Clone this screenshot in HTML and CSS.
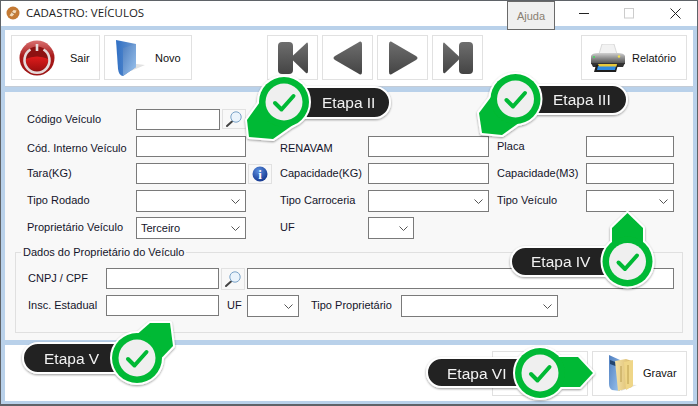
FILE: index.html
```html
<!DOCTYPE html>
<html lang="pt">
<head>
<meta charset="utf-8">
<title>Cadastro: Veículos</title>
<link rel="stylesheet" href="styles.css">
</head>
<body>
<svg class="defs" width="0" height="0">
  <defs>
    <linearGradient id="gRed" x1="0" y1="0" x2="0" y2="1"><stop offset="0" stop-color="#d97070"/><stop offset=".45" stop-color="#a81a1a"/><stop offset="1" stop-color="#9c1414"/></linearGradient>
    <linearGradient id="gRedIn" x1="0" y1="0" x2="0" y2="1"><stop offset="0" stop-color="#e01c1c"/><stop offset="1" stop-color="#a00f0f"/></linearGradient>
    <linearGradient id="gBlue" x1="0" y1="0" x2="1" y2="1"><stop offset="0" stop-color="#4f7fc0"/><stop offset="1" stop-color="#9cc4ee"/></linearGradient>
    <linearGradient id="gBlueL" x1="0" y1="0" x2="1" y2="0"><stop offset="0" stop-color="#2f6fc4"/><stop offset="1" stop-color="#6f9ad0"/></linearGradient>
    <linearGradient id="gGrey" x1="0" y1="0" x2="0" y2="1"><stop offset="0" stop-color="#6e6e6e"/><stop offset="1" stop-color="#444"/></linearGradient>
    <linearGradient id="gGold" x1="0" y1="0" x2="1" y2="0"><stop offset="0" stop-color="#f5e3a8"/><stop offset="1" stop-color="#d9b868"/></linearGradient>
    <linearGradient id="gBody" x1="0" y1="0" x2="0" y2="1"><stop offset="0" stop-color="#d0d0d0"/><stop offset=".5" stop-color="#8a8a8a"/><stop offset="1" stop-color="#4a4a4a"/></linearGradient>
    <radialGradient id="gInfo" cx="40%" cy="30%" r="75%"><stop offset="0" stop-color="#5b8fe0"/><stop offset="1" stop-color="#12348c"/></radialGradient>
    <filter id="shadow" x="-20%" y="-20%" width="140%" height="140%"><feDropShadow dx="0" dy="1" stdDeviation="1.2" flood-color="#000" flood-opacity=".4"/></filter>
    <g id="lens">
      <path d="M3 17 L8 12.500" class="lens-handle"/>
      <circle cx="12" cy="8" r="5.200" class="lens-glass"/>
    </g>
    <g id="chk">
      <circle r="18.500" class="co-inner"/>
      <path d="M-9 1 L-2.500 7.500 L9.500 -6" class="co-check"/>
    </g>
  </defs>
</svg>

<div class="window">
  <header class="titlebar">
    <svg class="app-icon" width="14" height="14" viewBox="0 0 14 14"><circle cx="7" cy="7" r="6.500" fill="#c47a34"/><path d="M3.500 9.500 L7.500 4 L10.500 4.500 L9.500 7 L6 10.500Z" fill="#f3dcbc"/><path d="M6 6.500L9 8" stroke="#8a4f18" stroke-width=".8"/></svg>
    <span class="title">CADASTRO: VEÍCULOS</span>
    <span class="ajuda">Ajuda</span>
    <svg class="win-btn win-min" width="10" height="11" viewBox="0 0 10 11"><path d="M0 5.500H10" stroke="#222"/></svg>
    <svg class="win-btn win-max" width="10" height="11" viewBox="0 0 10 11"><rect x=".5" y=".5" width="9" height="9.500" fill="none" stroke="#ccc"/></svg>
    <svg class="win-btn win-close" width="11" height="11" viewBox="0 0 11 11"><path d="M.5 .5L10.500 10.500M10.500 .5L.5 10.500" stroke="#222"/></svg>
  </header>

  <section class="panel toolbar">
    <div class="tbtn w-sair">
      <svg width="36" height="36" viewBox="0 0 36 36"><circle cx="18" cy="18" r="17.500" fill="url(#gRed)"/><circle cx="18" cy="19" r="12.500" fill="#8d1212"/><path d="M6.500 19 Q18 14 29.500 19 A11.500 11.500 0 0 1 6.500 19Z" fill="url(#gRedIn)"/><path d="M11.500 9.500 A12.500 12.500 0 1 0 24.500 9.500" fill="none" stroke="#e6dada" stroke-width="2.600"/><path d="M18 4V11" stroke="#e6dada" stroke-width="2.600"/></svg>
      <span class="tlabel">Sair</span>
    </div>
    <div class="tbtn w-novo">
      <svg width="30" height="38" viewBox="0 0 30 38"><path d="M14 24 L30 26 L16 32Z" fill="#e2e2e2"/><path d="M1 1 L21 5 V28 L8 37 Q4 37 3 30Z" fill="url(#gBlueL)"/><path d="M8 9 L21 5 V28 L8 37 Z" fill="url(#gBlue)"/></svg>
      <span class="tlabel">Novo</span>
    </div>
    <div class="nav">
      <div class="nbtn"><svg width="30" height="34" viewBox="0 0 30 34"><rect x="0" y="1" width="15" height="32" rx="4" fill="url(#gGrey)"/><path d="M29 1.500 Q30 1 30 4 V30 Q30 33 28 32 L14.500 19 Q12.500 17 14.500 15Z" fill="url(#gGrey)"/></svg></div>
      <div class="nbtn"><svg width="30" height="34" viewBox="0 0 30 34"><path d="M27 .5 Q29 0 29 3 V31 Q29 34 27 33.500 L2 19 Q-1 17 2 15Z" fill="url(#gGrey)"/></svg></div>
      <div class="nbtn"><svg width="30" height="34" viewBox="0 0 30 34"><path d="M3 .5 Q1 0 1 3 V31 Q1 34 3 33.500 L28 19 Q31 17 28 15Z" fill="url(#gGrey)"/></svg></div>
      <div class="nbtn"><svg width="30" height="34" viewBox="0 0 30 34"><path d="M1 1.500 Q0 1 0 4 V30 Q0 33 2 32 L15.500 19 Q17.500 17 15.500 15Z" fill="url(#gGrey)"/><rect x="16" y="1" width="14" height="32" rx="4" fill="url(#gGrey)"/></svg></div>
    </div>
    <div class="tbtn w-rel">
      <svg width="36" height="28" viewBox="0 0 36 28"><path d="M12 0 H24 L27 10 H9Z" fill="#f2f2f2" stroke="#c4c4c4" stroke-width=".6"/><path d="M1 12 Q2 9 8 9 H28 Q34 9 35 12 V20 H1Z" fill="url(#gBody)"/><path d="M1 19 H35 L33 23 H3Z" fill="#333"/><path d="M6 21 H28 L26 28 H4Z" fill="#1d1d1d"/><path d="M8 22 H26 L25 26 H7Z" fill="#2f8ae0"/><path d="M8 20 H27 L26.500 22.500 H9Z" fill="#e8c83a"/><circle cx="4" cy="13" r="1" fill="#3edc5a"/><circle cx="29" cy="12.500" r="1.200" fill="#f4e04a"/></svg>
      <span class="tlabel">Relatório</span>
    </div>
  </section>

  <section class="panel form">
    <div class="rows">
      <div class="row">
        <label class="lab lab1">Código Veículo</label>
        <div class="fld1"><span class="input code"></span><span class="sq-btn"><svg width="20" height="20" viewBox="0 0 20 20"><use href="#lens"/></svg></span></div>
      </div>
      <div class="row">
        <label class="lab lab1 low">Cód. Interno Veículo</label>
        <div class="fld1"><span class="input full"></span></div>
        <label class="lab lab2 low">RENAVAM</label>
        <div class="fld2"><span class="input full"></span></div>
        <label class="lab lab3">Placa</label>
        <div class="fld3"><span class="input full"></span></div>
      </div>
      <div class="row">
        <label class="lab lab1">Tara(KG)</label>
        <div class="fld1"><span class="input full"></span><span class="sq-btn info"><svg width="16" height="16" viewBox="0 0 16 16"><circle cx="8" cy="8" r="7.500" fill="url(#gInfo)"/><text x="8" y="12.500" class="info-i">i</text></svg></span></div>
        <label class="lab lab2">Capacidade(KG)</label>
        <div class="fld2"><span class="input full"></span></div>
        <label class="lab lab3">Capacidade(M3)</label>
        <div class="fld3"><span class="input full"></span></div>
      </div>
      <div class="row">
        <label class="lab lab1">Tipo Rodado</label>
        <div class="fld1"><span class="select full"><svg class="chev" width="9" height="5" viewBox="0 0 9 5"><path d="M.5 .5L4.500 4.500L8.500 .5"/></svg></span></div>
        <label class="lab lab2">Tipo Carroceria</label>
        <div class="fld2"><span class="select full"><svg class="chev" width="9" height="5" viewBox="0 0 9 5"><path d="M.5 .5L4.500 4.500L8.500 .5"/></svg></span></div>
        <label class="lab lab3">Tipo Veículo</label>
        <div class="fld3"><span class="select full"><svg class="chev" width="9" height="5" viewBox="0 0 9 5"><path d="M.5 .5L4.500 4.500L8.500 .5"/></svg></span></div>
      </div>
      <div class="row">
        <label class="lab lab1">Proprietário Veículo</label>
        <div class="fld1"><span class="select full">Terceiro<svg class="chev" width="9" height="5" viewBox="0 0 9 5"><path d="M.5 .5L4.500 4.500L8.500 .5"/></svg></span></div>
        <label class="lab lab2">UF</label>
        <div class="fld2"><span class="select uf"><svg class="chev" width="9" height="5" viewBox="0 0 9 5"><path d="M.5 .5L4.500 4.500L8.500 .5"/></svg></span></div>
      </div>
    </div>

    <fieldset class="group">
      <legend>Dados do Proprietário do Veículo</legend>
      <div class="row grow">
        <label class="lab lab-g">CNPJ / CPF</label>
        <span class="input doc"></span>
        <span class="sq-btn g"><svg width="20" height="20" viewBox="0 0 20 20"><use href="#lens"/></svg></span>
        <span class="input name"></span>
      </div>
      <div class="row grow">
        <label class="lab lab-g">Insc. Estadual</label>
        <span class="input doc"></span>
        <label class="lab lab-uf">UF</label>
        <span class="select uf"><svg class="chev" width="9" height="5" viewBox="0 0 9 5"><path d="M.5 .5L4.500 4.500L8.500 .5"/></svg></span>
        <label class="lab lab-tp">Tipo Proprietário</label>
        <span class="select tp"><svg class="chev" width="9" height="5" viewBox="0 0 9 5"><path d="M.5 .5L4.500 4.500L8.500 .5"/></svg></span>
      </div>
    </fieldset>
  </section>

  <section class="panel footer">
    <div class="tbtn w-exc"><span class="tlabel exc">Excluir</span></div>
    <div class="tbtn w-grav">
      <svg width="30" height="38" viewBox="0 0 30 38"><path d="M14 30 L30 31 L14 37Z" fill="#e2e2e2"/><path d="M2 1 L13 6 V37 L5 36 Q2 34 2 30Z" fill="url(#gBlue)"/><path d="M3 6 L11 9 V13 L3 10Z" fill="#24456e"/><path d="M8 7 L19 5 L25 7 V33 L11 37Z" fill="url(#gGold)"/><path d="M17 8 L26 6 V32 L19 36Z" fill="#efd688"/><path d="M14 12V28M21 11V30" stroke="#b09240" stroke-width=".8"/></svg>
      <span class="tlabel">Gravar</span>
    </div>
  </section>

  <svg class="callouts" width="698" height="406" viewBox="0 0 698 406">
    <g class="callout">
      <rect x="270" y="87" width="120" height="31" rx="15.500" class="co-pill"/>
      <path d="M247 120L249 137L273 139L300 120L265 95Z" class="co-halo"/><circle cx="284" cy="102" r="25" class="co-halo"/>
      <path d="M247 120L249 137L273 139L300 120L265 95Z" class="co-green"/><circle cx="284" cy="102" r="25" class="co-green"/>
      <use href="#chk" x="284" y="102"/>
      <text x="322" y="108" class="co-text">Etapa II</text>
    </g>
    <g class="callout">
      <rect x="505" y="85" width="122" height="29" rx="14.500" class="co-pill"/>
      <path d="M479 113L482 133L502 135L530 115L500 85Z" class="co-halo"/><circle cx="515.500" cy="99" r="25" class="co-halo"/>
      <path d="M479 113L482 133L502 135L530 115L500 85Z" class="co-green"/><circle cx="515.500" cy="99" r="25" class="co-green"/>
      <use href="#chk" x="515.500" y="99"/>
      <text x="553" y="105" class="co-text">Etapa III</text>
    </g>
    <g class="callout">
      <rect x="511" y="247" width="120" height="29" rx="14.500" class="co-pill"/>
      <path d="M627.500 213L612 228V250H643V228Z" class="co-halo"/><circle cx="627.500" cy="261.500" r="25" class="co-halo"/>
      <path d="M627.500 213L612 228V250H643V228Z" class="co-green"/><circle cx="627.500" cy="261.500" r="25" class="co-green"/>
      <use href="#chk" x="627.500" y="261.500"/>
      <text x="531" y="267" class="co-text">Etapa IV</text>
    </g>
    <g class="callout">
      <rect x="23" y="343" width="116" height="30" rx="15" class="co-pill"/>
      <path d="M150 323H170L173 346L150 370L125 345L142 330Z" class="co-halo"/><circle cx="137" cy="358" r="25" class="co-halo"/>
      <path d="M150 323H170L173 346L150 370L125 345L142 330Z" class="co-green"/><circle cx="137" cy="358" r="25" class="co-green"/>
      <use href="#chk" x="137" y="358"/>
      <text x="44" y="364" class="co-text">Etapa V</text>
    </g>
    <g class="callout">
      <rect x="427" y="358" width="116" height="29" rx="14.500" class="co-pill"/>
      <path d="M578 357L593 373L580 387H540V357Z" class="co-halo"/><circle cx="540" cy="373" r="25" class="co-halo"/>
      <path d="M578 357L593 373L580 387H540V357Z" class="co-green"/><circle cx="540" cy="373" r="25" class="co-green"/>
      <use href="#chk" x="540" y="373"/>
      <text x="447" y="379" class="co-text">Etapa VI</text>
    </g>
  </svg>
</div>
</body>
</html>
```

FILE: styles.css
```css
* { box-sizing: border-box; }
html, body { margin: 0; padding: 0; }
body { width: 698px; height: 406px; overflow: hidden; font-family: "Liberation Sans", "DejaVu Sans", sans-serif; font-size: 11px; color: #14142a; }
.defs { position: absolute; }

.window { position: relative; width: 698px; height: 406px; display: flex; flex-direction: column; gap: 5px; background: #b9d1ea; border: 1px solid #5f6368; border-bottom-width: 2px; padding: 0 4px 3px; }

.titlebar { height: 25px; margin: 0 -4px -1px; background: #fff; display: flex; align-items: flex-start; padding-left: 5px; position: relative; }
.app-icon { margin-top: 5px; }
.title { font-family: "Open Sans", sans-serif; font-size: 11.5px; line-height: 24px; margin-left: 6px; color: #222; width: 481px; }
.ajuda { width: 48px; height: 29px; flex: none; background: #f0f0f0; border: 1px solid #6a6a6a; color: #8a7f72; text-align: center; line-height: 28px; font-size: 11px; position: relative; z-index: 2; }
.win-btn { flex: none; margin-top: 7px; }
.win-min { margin-left: 24px; }
.win-max { margin-left: 35px; }
.win-close { margin-left: 36px; }

.panel { background: #fff; flex: none; }
.toolbar { height: 57px; display: flex; align-items: center; padding: 0 6px 1px; gap: 4px; border-bottom: 1px solid #c4ccd6; }
.footer { height: 56px; display: flex; justify-content: flex-end; align-items: center; gap: 4px; padding: 0 6px; }

.tbtn { height: 45px; border: 1px solid #e1e1e1; background: #fff; display: flex; align-items: center; flex: none; }
.tlabel { color: #111; font-size: 11px; }
.w-sair { width: 89px; padding-left: 7px; }
.w-sair .tlabel { margin-left: 15px; }
.w-novo { width: 88px; padding-left: 10px; }
.w-novo .tlabel { margin-left: 10px; }
.w-rel { width: 106px; margin-left: auto; padding-left: 8px; }
.w-rel .tlabel { margin-left: 6px; }
.w-exc { width: 96px; justify-content: flex-end; padding-right: 12px; }
.exc { color: #999; }
.w-grav { width: 95px; padding-left: 14px; }
.w-grav .tlabel { margin-left: 6px; }

.nav { display: flex; gap: 4px; margin-left: 71px; }
.nbtn { width: 51px; height: 45px; border: 1px solid #e1e1e1; background: #fff; display: flex; align-items: center; justify-content: center; }

.form { height: 248px; background: #f8f8f8; padding-top: 17px; }
.rows { padding-left: 22px; height: 136px; }
.row { display: flex; height: 22px; margin-bottom: 5px; align-items: flex-start; }

.lab { line-height: 20px; white-space: nowrap; flex: none; color: #14142a; }
.lab1 { width: 109px; }
.lab2 { width: 88px; margin-left: 34px; }
.lab3 { width: 89px; margin-left: 8px; }
.low { padding-top: 2px; }
.fld1 { width: 110px; display: flex; flex: none; }
.fld2 { width: 121px; flex: none; }
.fld3 { width: 88px; flex: none; }

.input, .select { display: flex; align-items: center; background: #fff; border: 1px solid #7a7a7a; flex: none; }
.input { height: 21px; }
.select { height: 22px; position: relative; padding-left: 4px; }
.full { width: 100%; }
.fld1 .full, .fld2 .full, .fld3 .full { flex: none; }
.code { width: 84px; }
.uf { width: 46px; }
.chev { position: absolute; right: 5px; top: 8px; fill: none; stroke: #555; }

.sq-btn { width: 24px; height: 20px; margin-left: 2px; border: 1px solid #e1e1e1; background: #f8f8f8; display: flex; align-items: center; justify-content: center; flex: none; }
.info { height: 20px; margin-top: 1px; }
.lens-glass { fill: #eaf3fb; stroke: #7aa3c8; stroke-width: 1; }
.lens-handle { stroke: #444; stroke-width: 2; stroke-linecap: round; fill: none; }
.info-i { font-family: "Liberation Serif", serif; font-weight: 700; font-size: 13px; fill: #fff; text-anchor: middle; }

.group { margin: 0 10px; padding: 8px 0 0 12px; border: 1px solid #e0e0e0; height: 88px; min-width: 0; }
.group legend { padding: 0 2px; margin-left: -7px; font-size: 11px; line-height: 15px; color: #14142a; }
.grow { margin-bottom: 5px; }
.lab-g { width: 78px; }
.doc { width: 113px; }
.g { margin-left: 2px; height: 22px; }
.g + .name { margin-left: 2px; }
.name { width: 427px; }
.grow .uf { width: 52px; }
.lab-uf { width: 20px; margin-left: 8px; }
.lab-tp { width: 90px; margin-left: 12px; }
.tp { width: 157px; }

.callouts { position: absolute; left: -1px; top: -1px; pointer-events: none; }
.callout { filter: url(#shadow); }
.co-pill { fill: #222; stroke: #fff; stroke-width: 2; }
.co-halo { fill: #fff; stroke: #fff; stroke-width: 4; stroke-linejoin: round; }
.co-green { fill: #00b934; }
.co-inner { fill: #efefef; }
.co-check { fill: none; stroke: #00b934; stroke-width: 4; stroke-linecap: round; stroke-linejoin: round; }
.co-text { font-family: "Liberation Sans", sans-serif; font-size: 15.5px; fill: #f2f2f2; }
```
